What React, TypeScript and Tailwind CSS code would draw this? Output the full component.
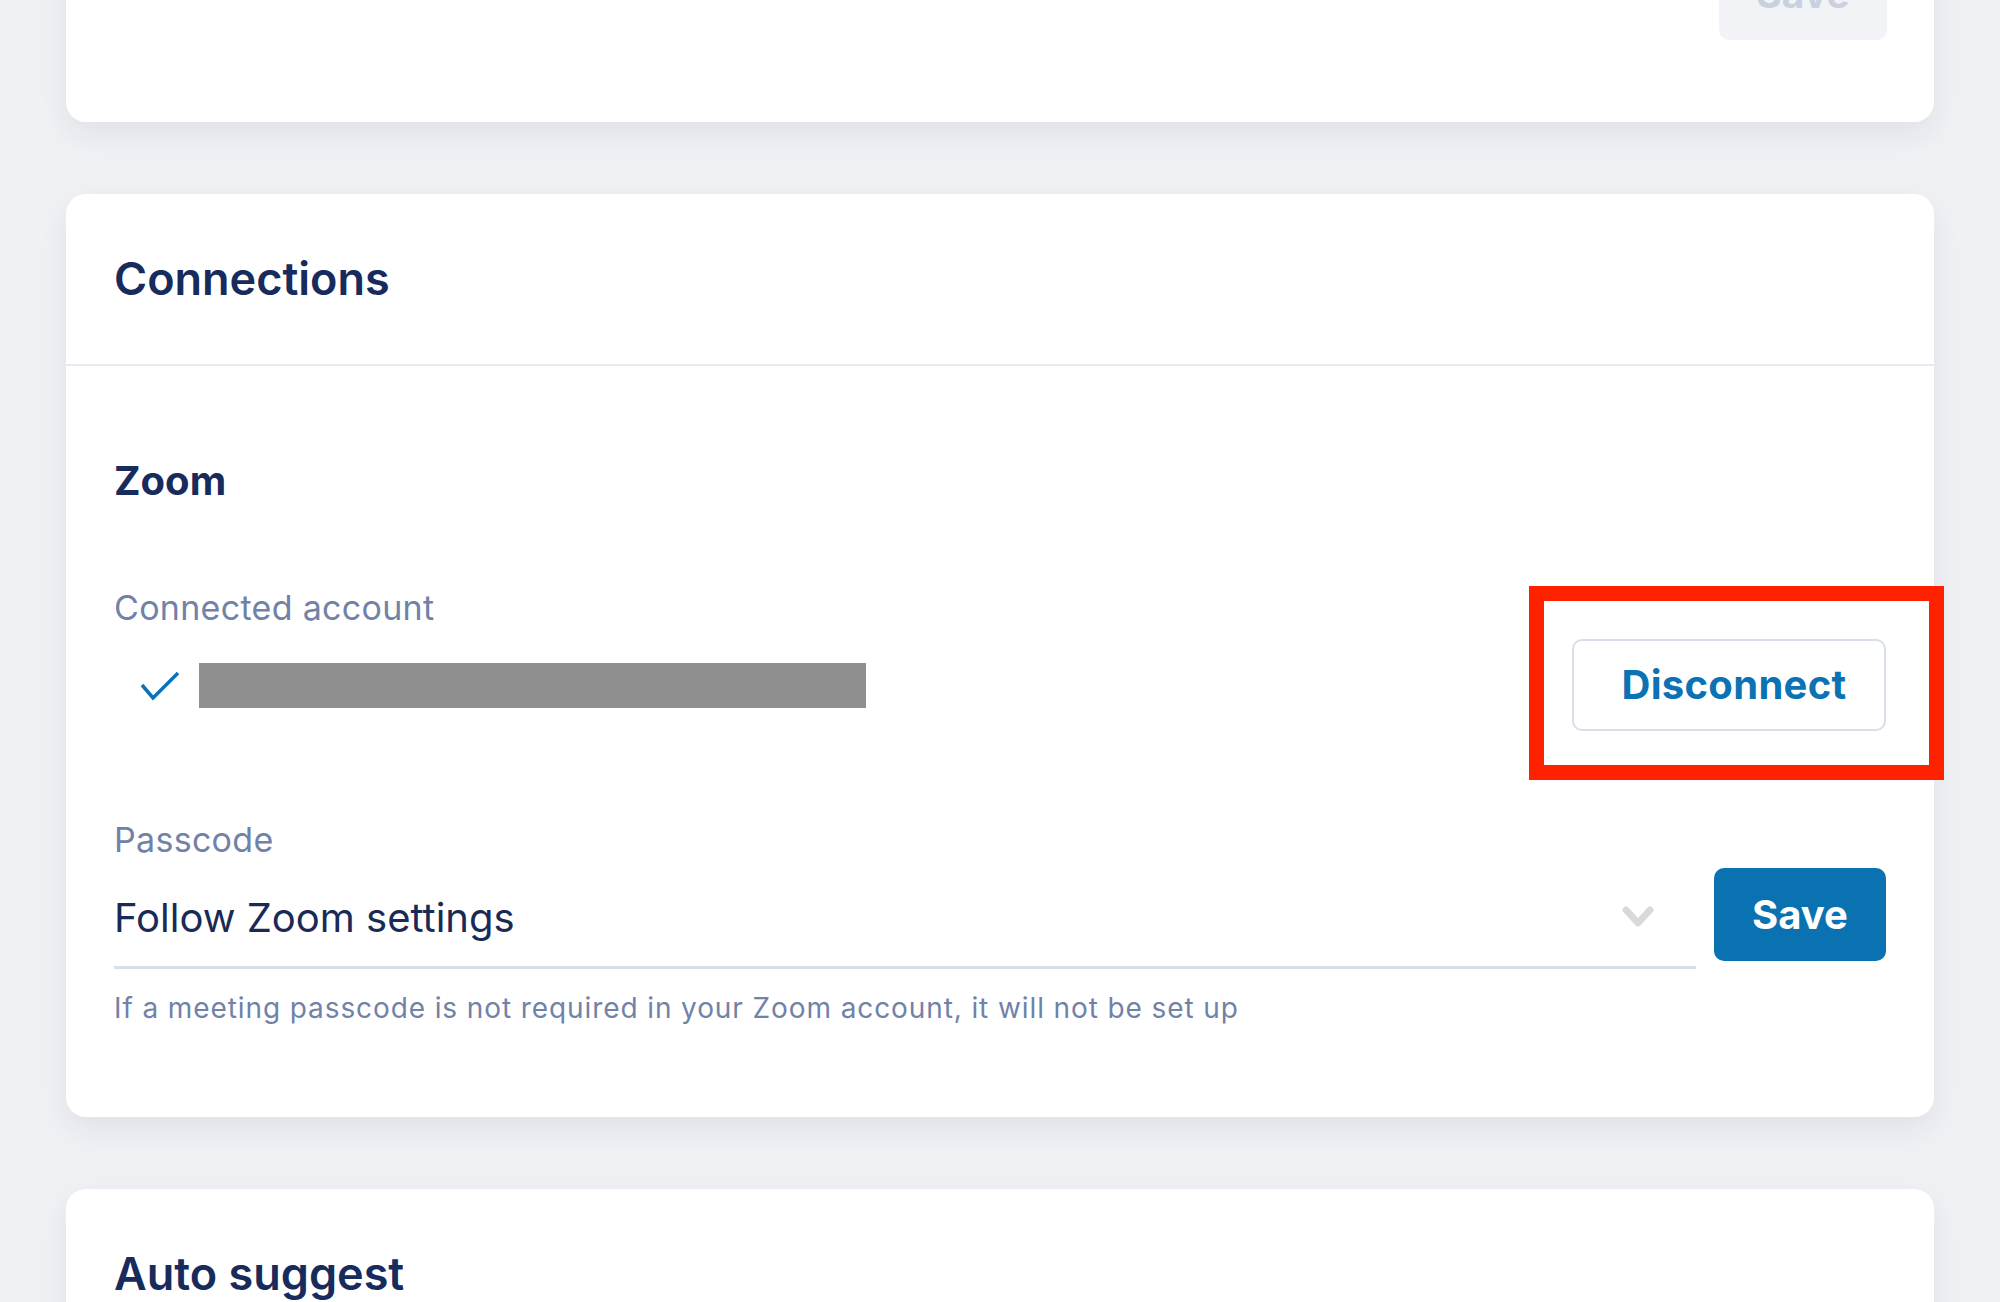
export default function App() {
  return (
    <div className="h-screen w-full overflow-hidden bg-[#f0f1f5] px-[66px] font-['Inter',sans-serif]">
      {/* previous card, only its bottom shows */}
      <div className="-mt-[60px] flex h-[182px] justify-end rounded-[20px] bg-white px-[47px] pt-[9px] shadow-[0_12px_32px_rgba(25,35,70,0.08)]">
        <div className="flex h-[91px] w-[168px] items-center justify-center rounded-[10px] bg-[#f2f3f7] text-[39px] font-bold text-[#c9d0df]">
          Save
        </div>
      </div>

      {/* Connections */}
      <div className="mt-[72px] rounded-[20px] bg-white shadow-[0_12px_32px_rgba(25,35,70,0.08)]">
        <div className="border-b-2 border-[#e8eaef] px-[48px] py-[57px]">
          <h2 className="text-[45px] font-semibold leading-[56px] text-[#172b5c]">Connections</h2>
        </div>

        <div className="px-[48px] pt-[92px] pb-[92px]">
          <h3 className="text-[40px] font-bold leading-[46px] text-[#172b5c]">Zoom</h3>

          <div className="mt-[83px] flex items-end justify-between">
            <div className="flex flex-col">
              <span className="text-[34px] leading-[41px] tracking-[0.3px] text-[#7182a8]">Connected account</span>
              <div className="mt-[12px] flex h-[91px] items-center">
                <svg width="40" height="30" viewBox="0 0 40 30" className="ml-[26px]">
                  <polyline points="2,14 13,27 38,2" fill="none" stroke="#0a72b5" strokeWidth="3.5" />
                </svg>
                <div className="ml-[19px] h-[45px] w-[667px] bg-[#8f8f8f]" />
              </div>
            </div>
            <div className="relative">
              <button className="flex h-[92px] w-[314px] items-center justify-center rounded-[10px] border-2 border-[#d8deea] bg-white pl-[10px] text-[40px] font-bold tracking-[0.3px] text-[#0b72b4]">
                Disconnect
              </button>
              <span className="absolute -top-[53px] -right-[58px] -bottom-[49px] -left-[43px] border-[15px] border-[#ff2200]" />
            </div>
          </div>

          <div className="mt-[88px]">
            <span className="block text-[34px] leading-[41px] tracking-[0.3px] text-[#7182a8]">Passcode</span>
            <div className="mt-[8px] flex items-start gap-[18px]">
              <div className="flex h-[101px] flex-1 items-center justify-between border-b-[3px] border-[#d8deea] pr-[42px]">
                <span className="text-[40px] leading-[47px] text-[#1a2a56]">Follow Zoom settings</span>
                <svg width="32" height="22" viewBox="0 0 32 22">
                  <polyline points="4,4 16,17 28,4" fill="none" stroke="#d9d9d9" strokeWidth="7" strokeLinecap="round" strokeLinejoin="round" />
                </svg>
              </div>
              <button className="flex h-[93px] w-[172px] items-center justify-center rounded-[10px] bg-[#0b72b2] text-[40px] font-bold text-white">
                Save
              </button>
            </div>
            <p className="mt-[23px] text-[28px] leading-[33px] tracking-[0.9px] text-[#7182a8]">
              If a meeting passcode is not required in your Zoom account, it will not be set up
            </p>
          </div>
        </div>
      </div>

      {/* Auto suggest */}
      <div className="mt-[72px] rounded-[20px] bg-white shadow-[0_12px_32px_rgba(25,35,70,0.08)]">
        <div className="px-[48px] py-[57px]">
          <h2 className="text-[45px] font-semibold leading-[56px] text-[#172b5c]">Auto suggest</h2>
        </div>
      </div>
    </div>
  );
}
